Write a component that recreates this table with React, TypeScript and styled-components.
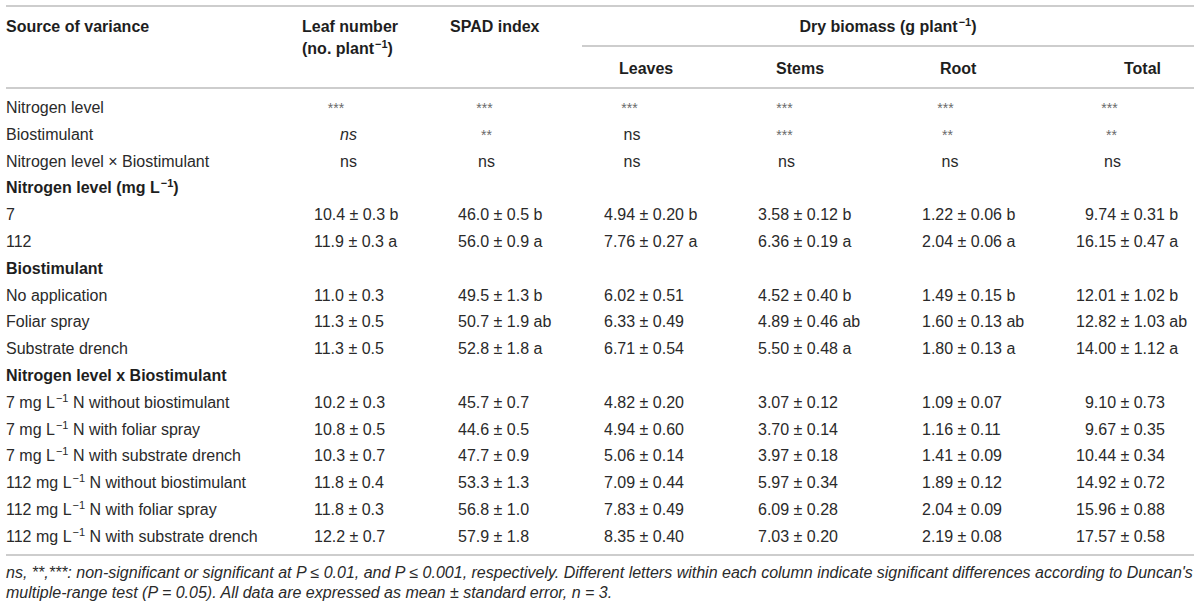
import React from "react";
import styled, { createGlobalStyle, css } from "styled-components";

const RULE = "#cdcdcd";

const GlobalStyle = createGlobalStyle`
  html, body {
    margin: 0;
    padding: 0;
    background: #ffffff;
  }
  body {
    font-family: "Liberation Sans", Arial, Helvetica, sans-serif;
    font-size: 16px;
    color: #2a2a2a;
  }
`;

// Styled Components
const Page = styled.div`
  width: 1188px;
  padding: 5px 6px 0;
`;

const Table = styled.table`
  width: 1188px;
  table-layout: fixed;
  border-collapse: separate;
  border-spacing: 0;
`;

const Sup = styled.sup<{ $bold?: boolean }>`
  font-size: 11px;
  line-height: 0;
  vertical-align: baseline;
  position: relative;
  top: -6px;
  margin-left: 1px;
  font-weight: ${(p) => (p.$bold ? 700 : "inherit")};
`;

const headBase = css`
  font-weight: 700;
  color: #1e1e1e;
  text-align: left;
  line-height: 22px;
  white-space: nowrap;
`;

const HeadCell = styled.th<{ $pad: number }>`
  ${headBase};
  vertical-align: top;
  padding: 9px 0 0 ${(p) => p.$pad}px;
  border-top: 2px solid ${RULE};
  border-bottom: 2px solid ${RULE};
`;

const GroupHead = styled.th`
  ${headBase};
  text-align: center;
  padding: 9px 0 7px;
  border-top: 2px solid ${RULE};
  border-bottom: 2px solid ${RULE};
`;

const SubHead = styled.th<{ $pad: number }>`
  ${headBase};
  padding: 11px 0 7px ${(p) => p.$pad}px;
  border-bottom: 2px solid ${RULE};
`;

const Row = styled.tr``;

const bodyCell = css<{ $first?: boolean; $last?: boolean }>`
  height: 26.8px;
  line-height: 26.8px;
  padding: ${(p) => (p.$first ? 6 : 0)}px 0 ${(p) => (p.$last ? 3.5 : 0)}px 0;
  vertical-align: top;
  white-space: nowrap;
  border-bottom: ${(p) => (p.$last ? `2px solid ${RULE}` : "none")};
`;

const Label = styled.td<{ $first?: boolean; $last?: boolean }>`
  ${bodyCell};
  color: #2a2a2a;
`;

const SectionCell = styled.td<{ $last?: boolean }>`
  ${bodyCell};
  font-weight: 700;
  color: #1e1e1e;
`;

const Value = styled.td<{ $last?: boolean; $pad: number }>`
  ${bodyCell};
  padding-left: ${(p) => p.$pad}px;
  color: #2a2a2a;
`;

const SigCell = styled.td<{ $first?: boolean; $last?: boolean; $pad: number }>`
  ${bodyCell};
  padding-left: ${(p) => p.$pad}px;
`;

type Sig = "***" | "**" | "ns" | "ns-i";

const Mark = styled.span<{ $kind: Sig }>`
  display: inline-block;
  width: 30px;
  text-align: center;
  color: ${(p) => (p.$kind === "***" || p.$kind === "**" ? "#6a6a6a" : "#2a2a2a")};
  font-size: ${(p) => (p.$kind === "***" || p.$kind === "**" ? 14 : 16)}px;
  font-style: ${(p) => (p.$kind === "ns-i" ? "italic" : "normal")};
`;

const Note = styled.p`
  margin: 0;
  padding-top: 7px;
  font-style: italic;
  line-height: 20px;
  color: #2a2a2a;
`;

type Col = {
  width: number;
  head: number; // header text offset
  data: number; // value offset
  star: number; // centre of *** marks
  ns: number; // centre of ns marks
};

const columns: Col[] = [
  { width: 150, head: 6, data: 18, star: 40, ns: 52.5 },
  { width: 136, head: 4, data: 12, star: 38.5, ns: 40.5 },
  { width: 170, head: 37, data: 22, star: 47.5, ns: 50 },
  { width: 163, head: 24, data: 6, star: 32.5, ns: 34.5 },
  { width: 155, head: 25, data: 7, star: 30.5, ns: 35 },
  { width: 124, head: 54, data: 6, star: 39.5, ns: 42.5 },
];

const sigRows: { label: string; marks: Sig[] }[] = [
  { label: "Nitrogen level", marks: ["***", "***", "***", "***", "***", "***"] },
  { label: "Biostimulant", marks: ["ns-i", "**", "ns", "***", "**", "**"] },
  { label: "Nitrogen level × Biostimulant", marks: ["ns", "ns", "ns", "ns", "ns", "ns"] },
];

const perL = (
  <>
    L<Sup>−1</Sup>
  </>
);

type Group = { title: React.ReactNode; rows: { label: React.ReactNode; values: string[] }[] };

const groups: Group[] = [
  {
    title: <>Nitrogen level (mg L<Sup $bold>−1</Sup>)</>,
    rows: [
      { label: "7", values: ["10.4 ± 0.3 b", "46.0 ± 0.5 b", "4.94 ± 0.20 b", "3.58 ± 0.12 b", "1.22 ± 0.06 b", "9.74 ± 0.31 b"] },
      { label: "112", values: ["11.9 ± 0.3 a", "56.0 ± 0.9 a", "7.76 ± 0.27 a", "6.36 ± 0.19 a", "2.04 ± 0.06 a", "16.15 ± 0.47 a"] },
    ],
  },
  {
    title: "Biostimulant",
    rows: [
      { label: "No application", values: ["11.0 ± 0.3", "49.5 ± 1.3 b", "6.02 ± 0.51", "4.52 ± 0.40 b", "1.49 ± 0.15 b", "12.01 ± 1.02 b"] },
      { label: "Foliar spray", values: ["11.3 ± 0.5", "50.7 ± 1.9 ab", "6.33 ± 0.49", "4.89 ± 0.46 ab", "1.60 ± 0.13 ab", "12.82 ± 1.03 ab"] },
      { label: "Substrate drench", values: ["11.3 ± 0.5", "52.8 ± 1.8 a", "6.71 ± 0.54", "5.50 ± 0.48 a", "1.80 ± 0.13 a", "14.00 ± 1.12 a"] },
    ],
  },
  {
    title: "Nitrogen level x Biostimulant",
    rows: [
      { label: <>7 mg {perL} N without biostimulant</>, values: ["10.2 ± 0.3", "45.7 ± 0.7", "4.82 ± 0.20", "3.07 ± 0.12", "1.09 ± 0.07", "9.10 ± 0.73"] },
      { label: <>7 mg {perL} N with foliar spray</>, values: ["10.8 ± 0.5", "44.6 ± 0.5", "4.94 ± 0.60", "3.70 ± 0.14", "1.16 ± 0.11", "9.67 ± 0.35"] },
      { label: <>7 mg {perL} N with substrate drench</>, values: ["10.3 ± 0.7", "47.7 ± 0.9", "5.06 ± 0.14", "3.97 ± 0.18", "1.41 ± 0.09", "10.44 ± 0.34"] },
      { label: <>112 mg {perL} N without biostimulant</>, values: ["11.8 ± 0.4", "53.3 ± 1.3", "7.09 ± 0.44", "5.97 ± 0.34", "1.89 ± 0.12", "14.92 ± 0.72"] },
      { label: <>112 mg {perL} N with foliar spray</>, values: ["11.8 ± 0.3", "56.8 ± 1.0", "7.83 ± 0.49", "6.09 ± 0.28", "2.04 ± 0.09", "15.96 ± 0.88"] },
      { label: <>112 mg {perL} N with substrate drench</>, values: ["12.2 ± 0.7", "57.9 ± 1.8", "8.35 ± 0.40", "7.03 ± 0.20", "2.19 ± 0.08", "17.57 ± 0.58"] },
    ],
  },
];

const totalRows = sigRows.length + groups.reduce((n, g) => n + 1 + g.rows.length, 0);

export default function App() {
  let rowIndex = 0;
  const nextRow = () => {
    rowIndex += 1;
    return { first: rowIndex === 1, last: rowIndex === totalRows };
  };

  return (
    <>
      <GlobalStyle />
      <Page>
        <Table>
          <colgroup>
            <col style={{ width: 290 }} />
            {columns.map((c, i) => (
              <col key={i} style={{ width: c.width }} />
            ))}
          </colgroup>
          <thead>
            <tr>
              <HeadCell rowSpan={2} $pad={0}>
                Source of variance
              </HeadCell>
              <HeadCell rowSpan={2} $pad={columns[0].head}>
                Leaf number
                <br />
                (no. plant<Sup $bold>−1</Sup>)
              </HeadCell>
              <HeadCell rowSpan={2} $pad={columns[1].head}>
                SPAD index
              </HeadCell>
              <GroupHead colSpan={4}>
                Dry biomass (g plant<Sup $bold>−1</Sup>)
              </GroupHead>
            </tr>
            <tr>
              {["Leaves", "Stems", "Root", "Total"].map((h, i) => (
                <SubHead key={h} $pad={columns[i + 2].head}>
                  {h}
                </SubHead>
              ))}
            </tr>
          </thead>
          <tbody>
            {sigRows.map((r) => {
              const { first, last } = nextRow();
              return (
                <Row key={r.label}>
                  <Label $first={first} $last={last}>
                    {r.label}
                  </Label>
                  {r.marks.map((m, i) => {
                    const c = columns[i];
                    const centre = m === "***" ? c.star : m === "**" ? c.star + 2 : c.ns;
                    return (
                      <SigCell key={i} $first={first} $last={last} $pad={centre - 15}>
                        <Mark $kind={m}>{m === "ns-i" ? "ns" : m}</Mark>
                      </SigCell>
                    );
                  })}
                </Row>
              );
            })}
            {groups.map((g, gi) => {
              const head = nextRow();
              return (
                <React.Fragment key={gi}>
                  <Row>
                    <SectionCell colSpan={7} $last={head.last}>
                      {g.title}
                    </SectionCell>
                  </Row>
                  {g.rows.map((r, ri) => {
                    const { last } = nextRow();
                    return (
                      <Row key={ri}>
                        <Label $last={last}>{r.label}</Label>
                        {r.values.map((v, i) => {
                          const c = columns[i];
                          const single = i === 5 && /^\d\./.test(v);
                          return (
                            <Value key={i} $last={last} $pad={c.data + (single ? 8.9 : 0)}>
                              {v}
                            </Value>
                          );
                        })}
                      </Row>
                    );
                  })}
                </React.Fragment>
              );
            })}
          </tbody>
        </Table>
        <Note>
          ns, **,***: non-significant or significant at P ≤ 0.01, and P ≤ 0.001, respectively. Different
          letters within each column indicate significant differences according to Duncan's multiple-range
          test (P = 0.05). All data are expressed as mean ± standard error, n = 3.
        </Note>
      </Page>
    </>
  );
}
